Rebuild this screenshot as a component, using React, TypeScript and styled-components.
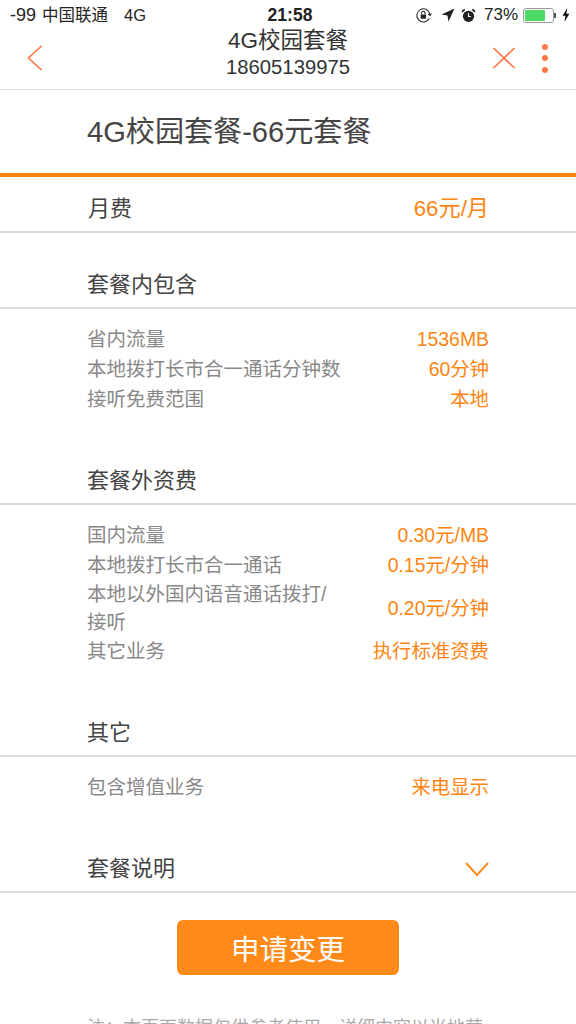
import React from "react";
import styled, { createGlobalStyle } from "styled-components";

const sections = [
  {
    title: "套餐内包含",
    rows: [
      { label: "省内流量", value: "1536MB" },
      { label: "本地拨打长市合一通话分钟数", value: "60分钟" },
      { label: "接听免费范围", value: "本地" },
    ],
  },
  {
    title: "套餐外资费",
    rows: [
      { label: "国内流量", value: "0.30元/MB" },
      { label: "本地拨打长市合一通话", value: "0.15元/分钟" },
      { label: "本地以外国内语音通话拨打/接听", value: "0.20元/分钟" },
      { label: "其它业务", value: "执行标准资费" },
    ],
  },
  {
    title: "其它",
    rows: [{ label: "包含增值业务", value: "来电显示" }],
  },
];

export default function App() {
  return (
    <Page>
      <GlobalStyle />
      <StatusBar>
        <StatusLeft>
          <span>-99</span>
          <Carrier>中国联通</Carrier>
          <Network>4G</Network>
        </StatusLeft>
        <Clock>21:58</Clock>
        <StatusRight>
          <svg width="17" height="17" viewBox="0 0 18 18" fill="none" stroke="#222" strokeWidth="1.1">
            <path d="M15.2 12A7 7 0 1 1 15.8 7.6" />
            <path d="M14 7.4l1.9 1.5 1.5-1.9" />
            <rect x="6" y="8" width="5.6" height="4.4" fill="#222" stroke="none" />
            <path d="M7 8V6.4a1.8 1.8 0 0 1 3.6 0V8" />
          </svg>
          <LocationIcon width="14" height="14" viewBox="0 0 14 14">
            <path d="M13.5 .5L.5 6.6l6 .9 1 6z" fill="#222" />
          </LocationIcon>
          <svg width="15" height="15" viewBox="0 0 16 16">
            <circle cx="8" cy="8.8" r="6" fill="#222" />
            <path d="M1 4l3-2.6M15 4l-3-2.6" stroke="#222" strokeWidth="1.8" />
            <path d="M8 5.4v3.6h2.6" stroke="#fff" strokeWidth="1.1" fill="none" />
          </svg>
          <Percent>73%</Percent>
          <Battery>
            <BatteryFill style={{ width: "73%" }} />
          </Battery>
          <BatteryCap />
          <svg width="8" height="14" viewBox="0 0 8 14">
            <path d="M5.2 0L.6 7.8h2.8L2.4 14l5-8.2H4.4z" fill="#111" />
          </svg>
        </StatusRight>
      </StatusBar>

      <NavBar>
        <NavButton aria-label="返回">
          <svg width="16" height="26" viewBox="0 0 16 26" fill="none" stroke="#ff7a45" strokeWidth="1.7">
            <path d="M14.5 1L1.5 13l13 12" />
          </svg>
        </NavButton>
        <NavTitle>
          <NavName>4G校园套餐</NavName>
          <NavPhone>18605139975</NavPhone>
        </NavTitle>
        <NavActions>
          <svg width="24" height="24" viewBox="0 0 24 24" fill="none" stroke="#ff7a45" strokeWidth="1.7">
            <path d="M1.5 2l21 20M22.5 2l-21 20" />
          </svg>
          <Dots>
            <Dot />
            <Dot />
            <Dot />
          </Dots>
        </NavActions>
      </NavBar>

      <PlanTitle>4G校园套餐-66元套餐</PlanTitle>

      <FeeRow>
        <FeeLabel>月费</FeeLabel>
        <FeeValue>66元/月</FeeValue>
      </FeeRow>

      {sections.map((section) => (
        <section key={section.title}>
          <SectionHead>{section.title}</SectionHead>
          <RowList>
            {section.rows.map((row) => (
              <Row key={row.label}>
                <RowLabel>{row.label}</RowLabel>
                <RowValue>{row.value}</RowValue>
              </Row>
            ))}
          </RowList>
        </section>
      ))}

      <SectionHead>
        套餐说明
        <svg width="24" height="15" viewBox="0 0 24 15" fill="none" stroke="#ff8a1a" strokeWidth="2">
          <path d="M1 1l11 12L23 1" />
        </svg>
      </SectionHead>

      <ButtonWrap>
        <ApplyButton>申请变更</ApplyButton>
      </ButtonWrap>

      <Note>注：本页面数据仅供参考使用，详细内容以当地营</Note>
    </Page>
  );
}

const GlobalStyle = createGlobalStyle`
  html, body {
    margin: 0;
    padding: 0;
    background: #fff;
  }
  * {
    box-sizing: border-box;
  }
`;

const Page = styled.div`
  width: 576px;
  height: 1024px;
  overflow: hidden;
  background: #fff;
  color: #444;
  font-family: "Liberation Sans", "Noto Sans CJK SC", sans-serif;
`;

const StatusBar = styled.div`
  height: 30px;
  padding: 0 6px 0 10px;
  display: grid;
  grid-template-columns: 1fr auto 1fr;
  align-items: center;
  color: #222;
`;

const StatusLeft = styled.div`
  display: flex;
  align-items: center;
  font-size: 18px;
  line-height: 30px;
`;

const Carrier = styled.span`
  margin-left: 6px;
  font-size: 16.5px;
`;

const Network = styled.span`
  margin-left: 16px;
  font-size: 16.5px;
`;

const Clock = styled.div`
  font-size: 17.5px;
  font-weight: 700;
`;

const StatusRight = styled.div`
  display: flex;
  align-items: center;
  justify-content: flex-end;
  gap: 6px;
`;

const LocationIcon = styled.svg`
  margin-left: 3px;
`;

const Percent = styled.span`
  font-size: 17px;
  margin-left: 2px;
`;

const Battery = styled.div`
  width: 31px;
  height: 15px;
  margin-left: -1px;
  padding: 1px;
  border: 1px solid #999;
  border-radius: 3px;
`;

const BatteryFill = styled.div`
  height: 100%;
  background: #4cd964;
  border-radius: 1px;
`;

const BatteryCap = styled.div`
  width: 2px;
  height: 5px;
  margin-left: -6px;
  background: #555;
`;

const NavBar = styled.div`
  height: 60px;
  padding: 0 28px 3px;
  display: grid;
  grid-template-columns: 1fr auto 1fr;
  align-items: center;
  border-bottom: 1px solid #ddd;
`;

const NavButton = styled.div`
  display: flex;
  align-items: center;
  margin-left: -1px;
`;

const NavTitle = styled.div`
  display: flex;
  flex-direction: column;
  align-items: center;
  margin-top: -8px;
  color: #333;
`;

const NavName = styled.div`
  font-size: 22.5px;
  line-height: 26px;
`;

const NavPhone = styled.div`
  font-size: 20.3px;
  line-height: 26px;
`;

const NavActions = styled.div`
  display: flex;
  align-items: center;
  justify-content: flex-end;
  gap: 26px;
`;

const Dots = styled.div`
  display: flex;
  flex-direction: column;
  gap: 5.5px;
`;

const Dot = styled.span`
  width: 6px;
  height: 6px;
  border-radius: 50%;
  background: #ff7a45;
`;

const PlanTitle = styled.h1`
  margin: 0;
  height: 87px;
  padding: 0 87px 6px;
  display: flex;
  align-items: center;
  font-size: 29.1px;
  font-weight: 400;
  color: #444;
  border-bottom: 4px solid #ff8410;
`;

const FeeRow = styled.div`
  height: 56px;
  padding: 3px 87px 0 88px;
  display: flex;
  align-items: center;
  justify-content: space-between;
  border-bottom: 2px solid #ddd;
`;

const FeeLabel = styled.span`
  font-size: 22px;
`;

const FeeValue = styled.span`
  font-size: 22.2px;
  color: #ff8410;
`;

const SectionHead = styled.div`
  height: 76px;
  padding: 0 87px 7px;
  display: flex;
  align-items: flex-end;
  justify-content: space-between;
  font-size: 22px;
  line-height: 30px;
  border-bottom: 2px solid #ddd;

  svg {
    margin-bottom: 7px;
  }
`;

const RowList = styled.div`
  padding: 15px 87px;
`;

const Row = styled.div`
  display: flex;
  align-items: center;
  justify-content: space-between;
  gap: 24px;
  min-height: 30px;
`;

const RowLabel = styled.span`
  max-width: 256px;
  font-size: 19.5px;
  line-height: 28px;
  color: #888;
`;

const RowValue = styled.span`
  flex-shrink: 0;
  font-size: 19.4px;
  line-height: 28px;
  color: #ff8410;
`;

const ButtonWrap = styled.div`
  padding-top: 27px;
  display: flex;
  justify-content: center;
`;

const ApplyButton = styled.div`
  width: 222px;
  height: 55px;
  display: flex;
  align-items: center;
  justify-content: center;
  background: #ff8a1a;
  color: #fff;
  font-size: 28.5px;
  border-radius: 6px;
`;

const Note = styled.div`
  margin-top: 38px;
  padding: 0 87px;
  font-size: 18px;
  white-space: nowrap;
  color: #aaa;
`;
